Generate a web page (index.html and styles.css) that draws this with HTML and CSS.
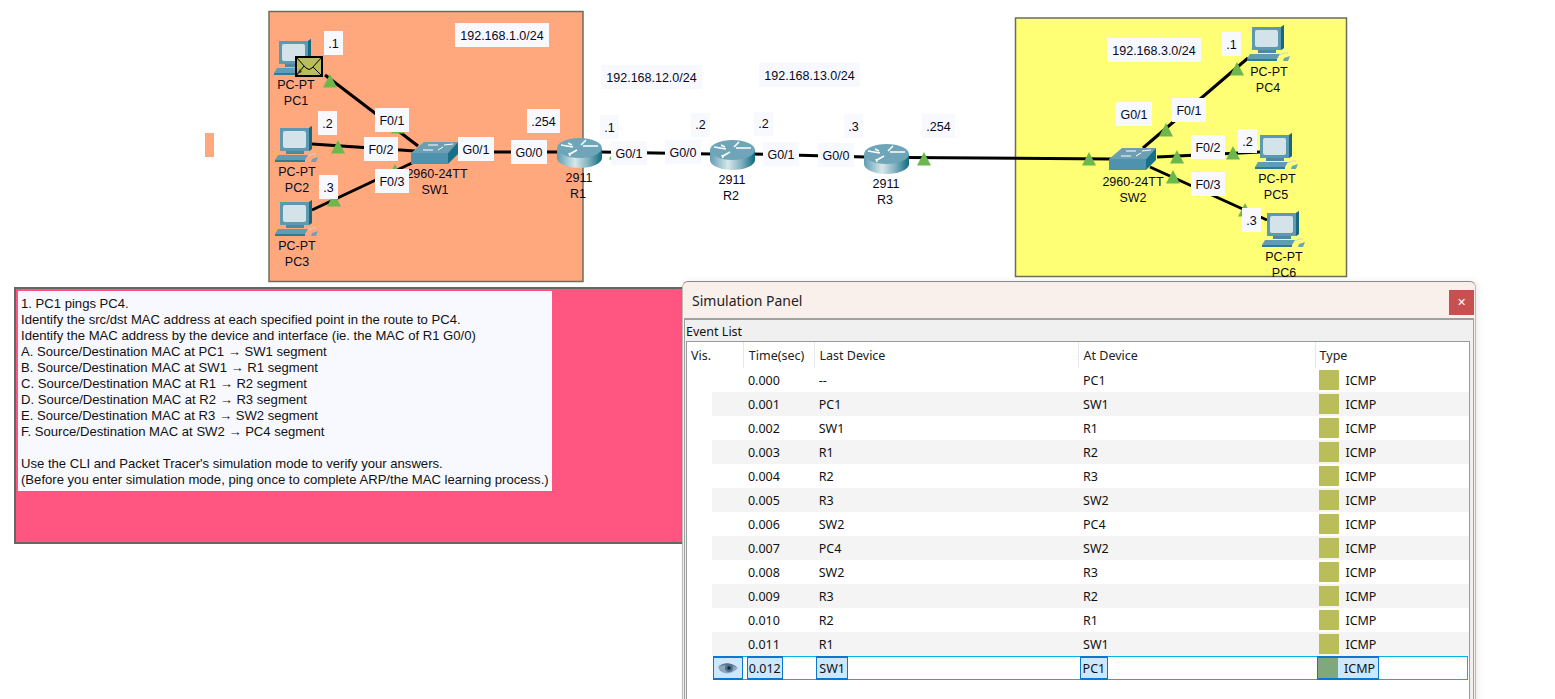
FILE: index.html
```html
<!DOCTYPE html>
<html lang="en">
  <head>
    <meta charset="UTF-8" />
    <meta name="viewport" content="width=device-width, initial-scale=1.0" />
    <title>Simulation Panel</title>
    <link rel="stylesheet" href="styles.css">
  </head>
  <body>
    <!-- note, sits under the topology and the panel -->
    <div class="note">
      <div class="note-text">
        1. PC1 pings PC4.<br />
        Identify the src/dst MAC address at each specified point in the route to PC4.<br />
        Identify the MAC address by the device and interface (ie. the MAC of R1 G0/0)<br />
        A. Source/Destination MAC at PC1 → SW1 segment<br />
        B. Source/Destination MAC at SW1 → R1 segment<br />
        C. Source/Destination MAC at R1 → R2 segment<br />
        D. Source/Destination MAC at R2 → R3 segment<br />
        E. Source/Destination MAC at R3 → SW2 segment<br />
        F. Source/Destination MAC at SW2 → PC4 segment<br />
        <br />
        Use the CLI and Packet Tracer's simulation mode to verify your answers.<br />
        (Before you enter simulation mode, ping once to complete ARP/the MAC learning process.)
      </div>
    </div>

    <svg class="topology" width="1555" height="699" viewBox="0 0 1555 699">
      <defs>
        <linearGradient id="routerBody" x1="0" x2="1" y1="0" y2="0">
          <stop offset="0" stop-color="#5f9db2" />
          <stop offset="0.4" stop-color="#d6e8ea" />
          <stop offset="0.7" stop-color="#7fb0bf" />
          <stop offset="1" stop-color="#0f6a80" />
        </linearGradient>

        <symbol id="pc" width="44" height="37" viewBox="0 0 44 37" overflow="visible">
          <path d="M5 2 L34 2 L37 0 L37 23 L34 25 L5 25 Z" fill="#5c9ab2" />
          <path d="M34 2 L37 0 L37 23 L34 25 Z" fill="#16687f" />
          <rect x="8" y="5" width="23" height="17" rx="2" fill="#d3e3e9" />
          <rect x="11" y="25" width="18" height="3" fill="#4d8aa1" />
          <path d="M3 29 L33 29 L30 34 L0 34 Z" fill="#5f9db4" />
          <path d="M0 34 L30 34 L30 36 L0 36 Z" fill="#2f7b92" />
          <path d="M33 30 q4 -3 8 -2" fill="none" stroke="#c9d4d4" />
          <path d="M37 33 L43 31 L41 36 L36 36 Z" fill="#6ea3b6" />
        </symbol>

        <symbol id="switch" width="48" height="23" viewBox="0 0 48 23" overflow="visible">
          <path d="M0 11 L13 0 L47 0 L37 11 Z" fill="#6c9fb4" />
          <path d="M0 11 L37 11 L37 22 L0 22 Z" fill="#4f92ad" />
          <path d="M37 11 L47 0 L47 12 L37 22 Z" fill="#17708a" />
          <path d="M12 8 L22 8 M17 3 L27 3 M27 8 L32 5 M33 3 L42 2" stroke="#fff" stroke-width="1" />
        </symbol>

        <symbol id="router" width="45" height="30" viewBox="0 0 45 30" overflow="visible">
          <path d="M0 10 L0 20 A22.5 10 0 0 0 45 20 L45 10 Z" fill="url(#routerBody)" />
          <ellipse cx="22.5" cy="10" rx="22.5" ry="10" fill="#6fa5b9" />
          <path d="M4 7 L16 9 M11 5 L15 7 M24 7 L29 2 M26 8 L41 8 M13 16 L20 12 M12 15 L13 18" stroke="#fff" stroke-width="1.6" fill="none" />
        </symbol>

        <symbol id="up" width="14" height="14" viewBox="0 0 14 14" overflow="visible">
          <path d="M7 0 L14 13.5 L0 13.5 Z" fill="#6cb84c" />
        </symbol>
      </defs>

      <rect x="205" y="133" width="9" height="24" fill="#ffa87d" />
      <rect class="zone" x="269" y="11.500" width="314" height="270" fill="#ffa87d" />
      <rect class="zone" x="1015.5" y="18" width="331" height="258.500" fill="#ffff75" />

      <!-- links -->
      <g class="wire">
        <path d="M325 75 L418 146" />
        <path d="M312 144 L415 151" />
        <path d="M312 210 L412 163" />
        <path d="M455 152 L560 152" />
        <path d="M600 152 L712 154" />
        <path d="M752 154 L866 157" />
        <path d="M906 157.500 L1112 159" />
        <path d="M1143 148 L1248 58" />
        <path d="M1157 157 L1260 152" />
        <path d="M1150 167 L1267 220" />
      </g>

      <use href="#up" x="323" y="74" />
      <use href="#up" x="391" y="120" />
      <use href="#up" x="331" y="140" />
      <use href="#up" x="388" y="164" />
      <use href="#up" x="327" y="193" />
      <use href="#up" x="609" y="146" />
      <use href="#up" x="917" y="152" />
      <use href="#up" x="1082" y="152" />
      <use href="#up" x="1159" y="123" />
      <use href="#up" x="1230" y="62" />
      <use href="#up" x="1170" y="150" />
      <use href="#up" x="1226" y="146" />
      <use href="#up" x="1166" y="170" />
      <use href="#up" x="1238" y="203" />

      <!-- devices -->
      <use href="#pc" x="274" y="39" />
      <use href="#pc" x="275" y="126" />
      <use href="#pc" x="275" y="200" />
      <use href="#pc" x="1247" y="25" />
      <use href="#pc" x="1255" y="133" />
      <use href="#pc" x="1262" y="211" />
      <use href="#switch" x="411" y="142" />
      <use href="#switch" x="1109" y="148" />
      <use href="#router" x="557" y="138" />
      <use href="#router" x="710" y="140" />
      <use href="#router" x="864" y="144" />

      <g class="name">
        <text x="296" y="89">PC-PT</text><text x="296" y="105">PC1</text>
        <text x="297" y="176">PC-PT</text><text x="297" y="192">PC2</text>
        <text x="297" y="250">PC-PT</text><text x="297" y="266">PC3</text>
        <text x="437" y="178">2960-24TT</text><text x="435" y="194">SW1</text>
        <text x="579" y="182">2911</text><text x="578" y="198">R1</text>
        <text x="732" y="184">2911</text><text x="731" y="200">R2</text>
        <text x="886" y="188">2911</text><text x="885" y="204">R3</text>
        <text x="1269" y="76">PC-PT</text><text x="1268" y="92">PC4</text>
        <text x="1277" y="183">PC-PT</text><text x="1276" y="199">PC5</text>
        <text x="1284" y="261">PC-PT</text><text x="1284" y="277">PC6</text>
        <text x="1133" y="186">2960-24TT</text><text x="1133" y="202">SW2</text>
      </g>

      <!-- address and port notes -->
      <g class="tag-box">
        <rect x="324" y="31" width="19" height="24" />
        <rect x="455" y="23" width="94" height="24" />
        <rect x="318" y="111" width="19" height="24" />
        <rect x="319" y="175" width="19" height="24" />
        <rect x="375" y="108" width="34" height="24" />
        <rect x="364" y="137" width="34" height="24" />
        <rect x="375" y="169" width="34" height="24" />
        <rect x="458" y="137" width="36" height="24" />
        <rect x="511" y="140" width="36" height="24" />
        <rect x="527" y="109" width="33" height="24" />
        <rect x="600" y="115" width="19" height="24" />
        <rect x="601" y="65" width="101" height="24" />
        <rect x="759" y="63" width="101" height="24" />
        <rect x="611" y="141" width="36" height="24" />
        <rect x="665" y="140" width="36" height="24" />
        <rect x="691" y="113" width="19" height="24" />
        <rect x="754" y="112" width="19" height="24" />
        <rect x="763" y="142" width="36" height="24" />
        <rect x="844" y="114" width="19" height="24" />
        <rect x="818" y="143" width="36" height="24" />
        <rect x="922" y="114" width="33" height="24" />
        <rect x="1107" y="38" width="94" height="24" />
        <rect x="1222" y="32" width="19" height="24" />
        <rect x="1116" y="102" width="36" height="24" />
        <rect x="1172" y="98" width="34" height="24" />
        <rect x="1191" y="135" width="34" height="24" />
        <rect x="1238" y="129" width="19" height="24" />
        <rect x="1191" y="172" width="34" height="24" />
        <rect x="1242" y="208" width="19" height="24" />
      </g>
      <g class="name">
        <text x="333.500" y="48">.1</text>
        <text x="502" y="40">192.168.1.0/24</text>
        <text x="327.500" y="128">.2</text>
        <text x="328.500" y="192">.3</text>
        <text x="392" y="125">F0/1</text>
        <text x="381" y="154">F0/2</text>
        <text x="392" y="186">F0/3</text>
        <text x="476" y="154">G0/1</text>
        <text x="529" y="157">G0/0</text>
        <text x="543.500" y="126">.254</text>
        <text x="609.500" y="132">.1</text>
        <text x="651.500" y="82">192.168.12.0/24</text>
        <text x="809.500" y="80">192.168.13.0/24</text>
        <text x="629" y="158">G0/1</text>
        <text x="683" y="157">G0/0</text>
        <text x="700.500" y="129">.2</text>
        <text x="763.500" y="128">.2</text>
        <text x="781" y="159">G0/1</text>
        <text x="853.500" y="131">.3</text>
        <text x="836" y="160">G0/0</text>
        <text x="938.500" y="131">.254</text>
        <text x="1154" y="55">192.168.3.0/24</text>
        <text x="1231.500" y="49">.1</text>
        <text x="1134" y="119">G0/1</text>
        <text x="1189" y="115">F0/1</text>
        <text x="1208" y="152">F0/2</text>
        <text x="1247.500" y="146">.2</text>
        <text x="1208" y="189">F0/3</text>
        <text x="1251.500" y="225">.3</text>
      </g>

      <!-- pdu travelling at PC1 -->
      <g class="pdu">
        <rect x="296" y="57" width="26" height="19" fill="#b9be5b" stroke="#000" stroke-width="2" />
        <path d="M296 57 L306 68 Q309 71 312 68 L322 57 M296 76 L304 66 M322 76 L313 67" fill="none" stroke="#000" stroke-width="1" />
        <path d="M297 74 L300 69 L302 72 Z" fill="#333" />
      </g>
    </svg>

    <div class="panel">
      <div class="panel-title">
        <span>Simulation Panel</span>
        <button class="close">✕</button>
      </div>
      <div class="panel-body">
        <div class="event-caption">Event List</div>
        <div class="event-table">
          <div class="head">
            <div class="c-vis">Vis.</div>
            <div class="c-time">Time(sec)</div>
            <div class="c-last">Last Device</div>
            <div class="c-at">At Device</div>
            <div class="c-type">Type</div>
          </div>

          <div class="row"><div class="c-vis"></div><div class="c-time">0.000</div><div class="c-last">--</div><div class="c-at">PC1</div><div class="c-type"><i class="swatch"></i>ICMP</div></div>
          <div class="row alt"><div class="c-vis"></div><div class="c-time">0.001</div><div class="c-last">PC1</div><div class="c-at">SW1</div><div class="c-type"><i class="swatch"></i>ICMP</div></div>
          <div class="row"><div class="c-vis"></div><div class="c-time">0.002</div><div class="c-last">SW1</div><div class="c-at">R1</div><div class="c-type"><i class="swatch"></i>ICMP</div></div>
          <div class="row alt"><div class="c-vis"></div><div class="c-time">0.003</div><div class="c-last">R1</div><div class="c-at">R2</div><div class="c-type"><i class="swatch"></i>ICMP</div></div>
          <div class="row"><div class="c-vis"></div><div class="c-time">0.004</div><div class="c-last">R2</div><div class="c-at">R3</div><div class="c-type"><i class="swatch"></i>ICMP</div></div>
          <div class="row alt"><div class="c-vis"></div><div class="c-time">0.005</div><div class="c-last">R3</div><div class="c-at">SW2</div><div class="c-type"><i class="swatch"></i>ICMP</div></div>
          <div class="row"><div class="c-vis"></div><div class="c-time">0.006</div><div class="c-last">SW2</div><div class="c-at">PC4</div><div class="c-type"><i class="swatch"></i>ICMP</div></div>
          <div class="row alt"><div class="c-vis"></div><div class="c-time">0.007</div><div class="c-last">PC4</div><div class="c-at">SW2</div><div class="c-type"><i class="swatch"></i>ICMP</div></div>
          <div class="row"><div class="c-vis"></div><div class="c-time">0.008</div><div class="c-last">SW2</div><div class="c-at">R3</div><div class="c-type"><i class="swatch"></i>ICMP</div></div>
          <div class="row alt"><div class="c-vis"></div><div class="c-time">0.009</div><div class="c-last">R3</div><div class="c-at">R2</div><div class="c-type"><i class="swatch"></i>ICMP</div></div>
          <div class="row"><div class="c-vis"></div><div class="c-time">0.010</div><div class="c-last">R2</div><div class="c-at">R1</div><div class="c-type"><i class="swatch"></i>ICMP</div></div>
          <div class="row alt"><div class="c-vis"></div><div class="c-time">0.011</div><div class="c-last">R1</div><div class="c-at">SW1</div><div class="c-type"><i class="swatch"></i>ICMP</div></div>

          <div class="row current">
            <div class="c-vis">
              <span class="hit hit-eye">
                <svg width="20" height="13" viewBox="0 0 20 13">
                  <path d="M0 5 Q9 -3 20 6 Q11 15 2 9 Z" fill="#8fa6bb" />
                  <path d="M1 4 Q9 -2 19 5 Q10 2 1 4 Z" fill="#5f7890" />
                  <circle cx="11" cy="6" r="4" fill="#4d7391" />
                  <circle cx="11" cy="6" r="1.700" fill="#12283c" />
                </svg>
              </span>
            </div>
            <div class="c-time"><span class="hit hit-time">0.012</span></div>
            <div class="c-last"><span class="hit">SW1</span></div>
            <div class="c-at"><span class="hit">PC1</span></div>
            <div class="c-type"><span class="hit hit-type"><i class="swatch"></i>ICMP</span></div>
          </div>
        </div>
      </div>
    </div>
  </body>
</html>
```

FILE: styles.css
```css
body {
  margin: 0;
  width: 1555px;
  height: 699px;
  overflow: hidden;
  background: #fff;
  font-family: "Liberation Sans", Arial, sans-serif;
  color: #000;
}

/* topology canvas */
.topology {
  position: absolute;
  left: 0;
  top: 0;
}
.zone {
  stroke: #6c6c5c;
  stroke-width: 1.5;
}
.wire path {
  fill: none;
  stroke: #000;
  stroke-width: 3;
}
.tag-box rect {
  fill: #f8f8ff;
}
.name text {
  font-size: 12.5px;
  text-anchor: middle;
  fill: #08081a;
}

/* note */
.note {
  position: absolute;
  left: 14px;
  top: 287px;
  width: 680px;
  height: 251px;
  padding: 2px 0 0 2px;
  background: #ff5580;
  border: 2px solid #666;
  border-right: 0;
}
.note-text {
  width: 531px;
  padding: 5px 0 3px 3px;
  background: #f8f8ff;
  font-size: 13.1px;
  line-height: 16px;
  white-space: nowrap;
  color: #111;
}

/* simulation window */
.panel {
  position: absolute;
  left: 682px;
  top: 281px;
  width: 794px;
  height: 430px;
  box-sizing: border-box;
  background: #f9f0ec;
  border: 1px solid #bcb8b4;
  border-top-color: #8a8a8a;
  border-radius: 6px 6px 0 0;
  box-shadow: 2px 0 6px rgba(0, 0, 0, 0.08);
  font-family: "Noto Sans", sans-serif;
}
.panel-title {
  display: flex;
  justify-content: space-between;
  align-items: flex-start;
  height: 36px;
  padding: 8px 1px 0 9px;
  box-sizing: border-box;
  font-size: 14px;
  line-height: 21px;
  color: #222;
}
.close {
  width: 25px;
  height: 25px;
  padding: 0;
  border: 0;
  background: #c75050;
  color: #fff;
  font-size: 11px;
  font-weight: bold;
  font-family: "DejaVu Sans", sans-serif;
}
.panel-body {
  height: 390px;
  margin: 0 1px;
  padding: 0 3px 0 1px;
  background: #f0f0f0;
  border-top: 2px solid #a0a0a0;
  border-left: 1px solid #a0a0a0;
  border-right: 1px solid #a0a0a0;
}
.event-caption {
  height: 21px;
  font-size: 12.5px;
  line-height: 23px;
  color: #111;
}
.event-table {
  height: 370px;
  background: #fff;
  border: 1px solid #9a9a9a;
  font-size: 12.5px;
  color: #111;
}

/* event rows */
.head,
.row {
  display: flex;
  line-height: 26px;
}
.head {
  height: 26px;
  line-height: 27px;
  color: #222;
}
.head > div {
  box-sizing: border-box;
  border-right: 1px solid #e6e6e6;
  padding-left: 5px;
}
.head .c-vis {
  width: 57px;
  padding-left: 4px;
}
.head .c-at {
  width: 238px;
}
.head .c-type {
  width: 154px;
  padding-left: 4px;
  border-right: 0;
}
.row {
  height: 24px;
  margin-left: 25px;
}
.row.alt {
  background: #f4f4f4;
}
.row .c-vis {
  width: 32px;
}
.row > div {
  box-sizing: border-box;
}
.c-time {
  width: 71px;
  padding-left: 4px;
}
.c-last {
  width: 265px;
  padding-left: 4px;
}
.c-at {
  width: 237px;
  padding-left: 4px;
}
.c-type {
  width: 154px;
  padding-left: 4px;
}
.swatch {
  display: inline-block;
  width: 20px;
  height: 20px;
  margin-right: 6px;
  vertical-align: top;
  margin-top: 2px;
  background: #b9be5b;
}

/* current event */
.row.current {
  box-sizing: border-box;
  margin-left: 26px;
  margin-right: 1px;
  border: 1px solid #00b4e8;
  line-height: 22px;
}
.row.current .c-vis {
  width: 31px;
}
.hit {
  display: inline-block;
  box-sizing: border-box;
  height: 24px;
  margin: -1px 0 0 -3px;
  padding: 0 2px;
  background: #cce8ff;
  border: 1px solid #0a78d0;
  border-top-width: 2px;
  border-bottom-width: 2px;
  line-height: 21px;
  vertical-align: top;
}
.hit-eye {
  display: flex;
  align-items: center;
  justify-content: center;
  width: 30px;
  margin-left: -1px;
}
.hit-time {
  width: 36px;
  margin-left: -2px;
  padding: 0 1px;
}
.hit-type {
  width: 62px;
  margin-left: -1px;
  padding: 0;
  white-space: nowrap;
}
.hit-type .swatch {
  margin-top: 0;
  background: #7fa87c;
}
```
